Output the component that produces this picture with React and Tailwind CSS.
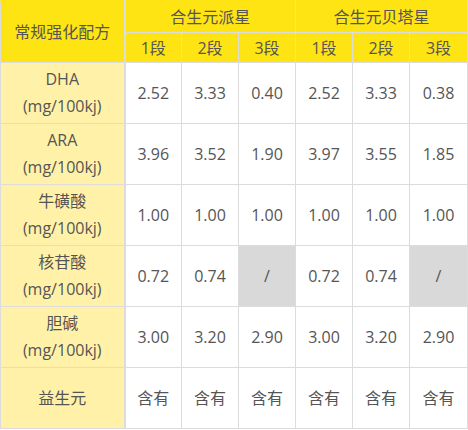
const rows = [
  { name: 'DHA', unit: true, vals: ['2.52', '3.33', '0.40', '2.52', '3.33', '0.38'] },
  { name: 'ARA', unit: true, vals: ['3.96', '3.52', '1.90', '3.97', '3.55', '1.85'] },
  { name: '牛磺酸', unit: true, vals: ['1.00', '1.00', '1.00', '1.00', '1.00', '1.00'] },
  { name: '核苷酸', unit: true, vals: ['0.72', '0.74', '/', '0.72', '0.74', '/'] },
  { name: '胆碱', unit: true, vals: ['3.00', '3.20', '2.90', '3.00', '3.20', '2.90'] },
  { name: '益生元', unit: false, vals: ['含有', '含有', '含有', '含有', '含有', '含有'] },
]

export default function App() {
  return (
    <div className="w-[468px] h-[430px] bg-white text-[#555] text-[16px]" style={{ fontFamily: '"Open Sans", "Noto Sans CJK SC", sans-serif' }}>
      <table className="border-collapse table-fixed w-[467px]">
        <colgroup>
          <col className="w-[124px]" />
          <col className="w-[57px]" />
          <col className="w-[57px]" />
          <col className="w-[57px]" />
          <col className="w-[57px]" />
          <col className="w-[57px]" />
          <col className="w-[58px]" />
        </colgroup>
        <thead>
          <tr className="h-[32px] bg-[#ffe414]">
            <th rowSpan={2} className="font-normal border border-[#dcdcdc] border-t-[#ffe414] border-r-2">常规强化配方</th>
            <th colSpan={3} className="font-normal border border-[#dcdcdc] border-t-[#ffe414]">合生元派星</th>
            <th colSpan={3} className="font-normal border border-[#dcdcdc] border-t-[#ffe414]">合生元贝塔星</th>
          </tr>
          <tr className="h-[30px] bg-[#ffe414]">
            {['1段', '2段', '3段', '1段', '2段', '3段'].map((s, i) => (
              <th key={i} className="font-normal border border-[#dcdcdc]">{s}</th>
            ))}
          </tr>
        </thead>
        <tbody>
          {rows.map((r) => (
            <tr key={r.name} className="h-[61px]">
              <td className="bg-[#fff2a8] border border-[#dcdcdc] border-r-2 text-center leading-[27px]">
                <div>{r.name}</div>
                {r.unit && <div>(mg/100kj)</div>}
              </td>
              {r.vals.map((v, i) => (
                <td key={i} className={`border border-[#dcdcdc] text-center ${v === '/' ? 'bg-[#d9d9d9]' : ''}`}>{v}</td>
              ))}
            </tr>
          ))}
        </tbody>
      </table>
    </div>
  )
}
